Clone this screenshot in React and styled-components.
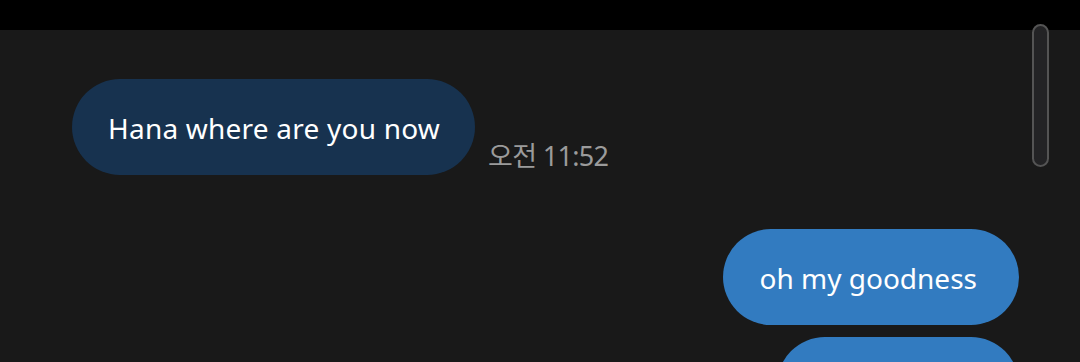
import React from "react";
import styled, { createGlobalStyle } from "styled-components";

const Global = createGlobalStyle`
  html, body { margin: 0; padding: 0; background: #191919; }
  body { font-family: "Noto Sans", "Noto Sans CJK KR", sans-serif; overflow: hidden; }
`;

const Screen = styled.div`
  position: relative;
  width: 1080px;
  height: 362px;
  overflow: hidden;
  background: #191919;
  display: flex;
  flex-direction: column;
`;

const StatusBar = styled.div`
  height: 30px;
  background: #000;
  flex: none;
`;

const List = styled.div`
  display: flex;
  flex-direction: column;
  padding: 49px 61px 0 72px;
`;

const Row = styled.div`
  display: flex;
  align-items: flex-end;
  justify-content: ${(p) => (p.$mine ? "flex-end" : "flex-start")};
  gap: 13px;
  margin-top: ${(p) => p.$top || 0}px;
`;

const Bubble = styled.div`
  box-sizing: border-box;
  height: 96px;
  padding: 2px ${(p) => (p.$mine ? 42 : 35)}px 0 36px;
  border-radius: 48px;
  display: flex;
  align-items: center;
  background: ${(p) => (p.$mine ? "#327bc0" : "#17324f")};
  color: #fff;
  font-size: 28px;
  letter-spacing: ${(p) => (p.$mine ? 0 : 0.22)}px;
  white-space: nowrap;
  min-width: ${(p) => p.$minW || 0}px;
`;

const Time = styled.span`
  color: #9b9b9b;
  font-size: 27px;
  line-height: 1;
  margin-bottom: 6px;
  letter-spacing: -0.7px;
`;

const Scrollbar = styled.div`
  position: absolute;
  top: 24px;
  left: 1032px;
  width: 17px;
  height: 143px;
  box-sizing: border-box;
  border: 2px solid #545454;
  border-radius: 9px;
  background: #232325;
`;

export default function App() {
  return (
    <Screen>
      <Global />
      <StatusBar />
      <List>
        <Row>
          <Bubble>Hana where are you now</Bubble>
          <Time>오전 11:52</Time>
        </Row>
        <Row $mine $top={54}>
          <Bubble $mine>oh my goodness</Bubble>
        </Row>
        <Row $mine $top={12}>
          <Bubble $mine $minW={242}>&nbsp;</Bubble>
        </Row>
      </List>
      <Scrollbar />
    </Screen>
  );
}
